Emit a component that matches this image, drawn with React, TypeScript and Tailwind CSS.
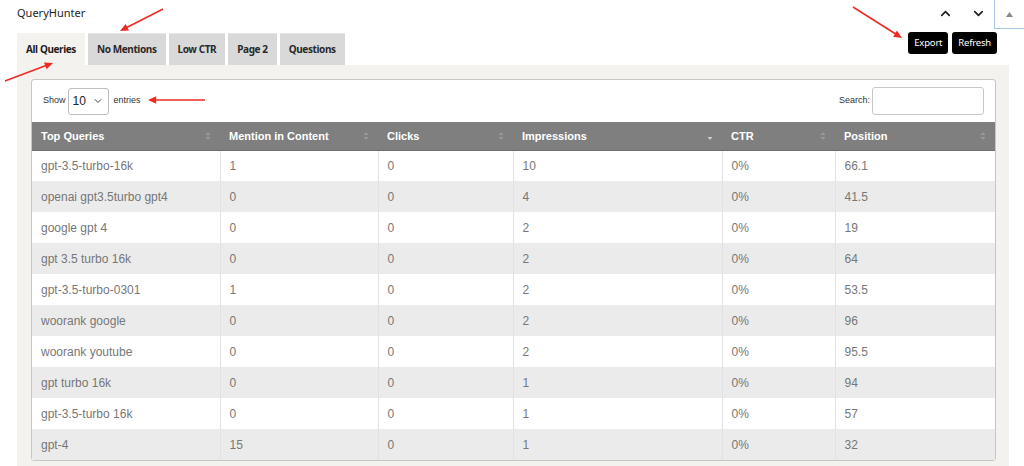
import { ChevronDown, ChevronUp } from "lucide-react";

const rows: [string, string, string, string, string, string][] = [
    ["gpt-3.5-turbo-16k", "1", "0", "10", "0%", "66.1"],
    ["openai gpt3.5turbo gpt4", "0", "0", "4", "0%", "41.5"],
    ["google gpt 4", "0", "0", "2", "0%", "19"],
    ["gpt 3.5 turbo 16k", "0", "0", "2", "0%", "64"],
    ["gpt-3.5-turbo-0301", "1", "0", "2", "0%", "53.5"],
    ["woorank google", "0", "0", "2", "0%", "96"],
    ["woorank youtube", "0", "0", "2", "0%", "95.5"],
    ["gpt turbo 16k", "0", "0", "1", "0%", "94"],
    ["gpt-3.5-turbo 16k", "0", "0", "1", "0%", "57"],
    ["gpt-4", "15", "0", "1", "0%", "32"],
];

const columns = [
    { label: "Top Queries", w: "w-[188px]" },
    { label: "Mention in Content", w: "w-[158px]" },
    { label: "Clicks", w: "w-[135px]" },
    { label: "Impressions", w: "w-[209px]", sorted: true },
    { label: "CTR", w: "w-[113px]" },
    { label: "Position", w: "w-[160px]" },
];

const tabs = ["All Queries", "No Mentions", "Low CTR", "Page 2", "Questions"];

function SortIcon({ sorted }: { sorted?: boolean }) {
    return (
        <svg width="6" height="10" viewBox="0 0 6 10" className="shrink-0">
            {!sorted && <path d="M3 1 L5.5 4 H0.5 Z" fill="#9a9a9a" />}
            <path d="M3 9 L5.5 6 H0.5 Z" fill={sorted ? "#cfcfcf" : "#9a9a9a"} />
        </svg>
    );
}

function Arrow({ x1, y1, x2, y2 }: { x1: number; y1: number; x2: number; y2: number }) {
    const a = Math.atan2(y2 - y1, x2 - x1);
    const len = 9;
    const spread = 0.42;
    const p1 = [x2 - len * Math.cos(a - spread), y2 - len * Math.sin(a - spread)];
    const p2 = [x2 - len * Math.cos(a + spread), y2 - len * Math.sin(a + spread)];
    const bx = x2 - 6 * Math.cos(a);
    const by = y2 - 6 * Math.sin(a);
    return (
        <g>
            <line x1={x1} y1={y1} x2={bx} y2={by} stroke="#ee2a24" strokeWidth="1.6" />
            <polygon points={`${x2},${y2} ${p1[0]},${p1[1]} ${p2[0]},${p2[1]}`} fill="#ee2a24" />
        </g>
    );
}

export default function App() {
    return (
        <div className="relative w-[1024px] h-[466px] overflow-hidden bg-white font-['Noto_Sans',sans-serif]">
            {/* Top bar */}
            <div className="flex items-start h-[33px]">
                <div className="pl-[17px] pt-[5px] text-[11px] text-[#1e1e1e]">QueryHunter</div>
                <div className="ml-auto flex items-start">
                    <div className="flex items-center gap-[18px] h-[26px] pr-[8px]">
                        <ChevronUp size={15} strokeWidth={2.6} className="text-[#1e1e1e]" />
                        <ChevronDown size={15} strokeWidth={2.6} className="text-[#1e1e1e]" />
                    </div>
                    <div className="w-[30px] h-[29px] border-l border-b border-[#a8c6e4] flex items-center justify-center">
                        <svg width="7" height="5" viewBox="0 0 7 5">
                            <path d="M3.5 0 L7 5 H0 Z" fill="#8a8a8a" />
                        </svg>
                    </div>
                </div>
            </div>

            {/* Tabs + actions */}
            <div className="flex items-start -mt-[1px] pr-[27px]">
                <div className="flex items-end gap-[3px] pl-[17px] pt-[1px]">
                    {tabs.map((t, i) => (
                        <div
                            key={t}
                            className={
                                i === 0
                                    ? "h-[32px] px-[9px] flex items-center bg-[#f3f2ef] text-[10px] tracking-[-0.4px] font-bold text-[#1e1e1e]"
                                    : "h-[32px] px-[9px] flex items-center bg-[#d9d9d9] border-t border-[#e6e6e6] text-[10px] tracking-[-0.4px] font-bold text-[#2a2a2a]"
                            }
                        >
                            {t}
                        </div>
                    ))}
                </div>
                <div className="ml-auto flex gap-[4px]">
                    <button className="h-[22px] px-[6px] rounded-[3px] bg-black text-white text-[9.5px] tracking-[-0.2px]">Export</button>
                    <button className="h-[22px] px-[6px] rounded-[3px] bg-black text-white text-[9.5px] tracking-[-0.2px]">Refresh</button>
                </div>
            </div>

            {/* Panel */}
            <div className="ml-[17px] mr-[15px] bg-[#f3f2ef] pt-[14px] pl-[14px] pr-[13px] h-[401px]">
                <div className="bg-white border border-[#c6c6c6] rounded-[3px] font-['Liberation_Sans',Arial,sans-serif]">
                    <div className="flex items-center h-[42px] pl-[11px] pr-[11px]">
                        <span className="text-[9px] text-[#333]">Show</span>
                        <div className="ml-[2px] w-[41px] h-[27px] border border-[#bdbdbd] rounded-[3px] flex items-center justify-between pl-[4px] pr-[4px] text-[12px] text-[#222]">
                            <span>10</span>
                            <ChevronDown size={12} strokeWidth={2} className="text-[#444]" />
                        </div>
                        <span className="ml-[5px] text-[9px] text-[#333]">entries</span>
                        <span className="ml-auto text-[9px] text-[#333]">Search:</span>
                        <div className="ml-[2px] w-[112px] h-[28px] border border-[#c8c8c8] rounded-[3px]" />
                    </div>
                    <table className="w-[963px] table-fixed border-collapse">
                        <thead>
                            <tr className="bg-[#7f7f7f] h-[28px]">
                                {columns.map((c) => (
                                    <th key={c.label} className={`${c.w} px-[9px] text-left text-[11px] font-bold text-white border-b border-[#6e6e6e]`}>
                                        <div className="flex items-center justify-between">
                                            <span>{c.label}</span>
                                            <SortIcon sorted={c.sorted} />
                                        </div>
                                    </th>
                                ))}
                            </tr>
                        </thead>
                        <tbody>
                            {rows.map((r, i) => (
                                <tr key={i} className={i % 2 === 0 ? "h-[31px] bg-white" : "h-[31px] bg-[#ebebeb]"}>
                                    {r.map((v, j) => (
                                        <td
                                            key={j}
                                            className={
                                                j === 0
                                                    ? "px-[9px] text-[12px] text-[#777]"
                                                    : "px-[9px] text-[12px] text-[#777] border-l border-[#e2e2e2]"
                                            }
                                        >
                                            {v}
                                        </td>
                                    ))}
                                </tr>
                            ))}
                        </tbody>
                    </table>
                </div>
            </div>

            {/* Annotation arrows */}
            <svg className="absolute inset-0 pointer-events-none" width="1024" height="466">
                <Arrow x1={163} y1={9} x2={120} y2={31} />
                <Arrow x1={5} y1={81} x2={53} y2={63} />
                <Arrow x1={205} y1={100} x2={148} y2={100} />
                <Arrow x1={853} y1={7} x2={902} y2={38} />
            </svg>
        </div>
    );
}
